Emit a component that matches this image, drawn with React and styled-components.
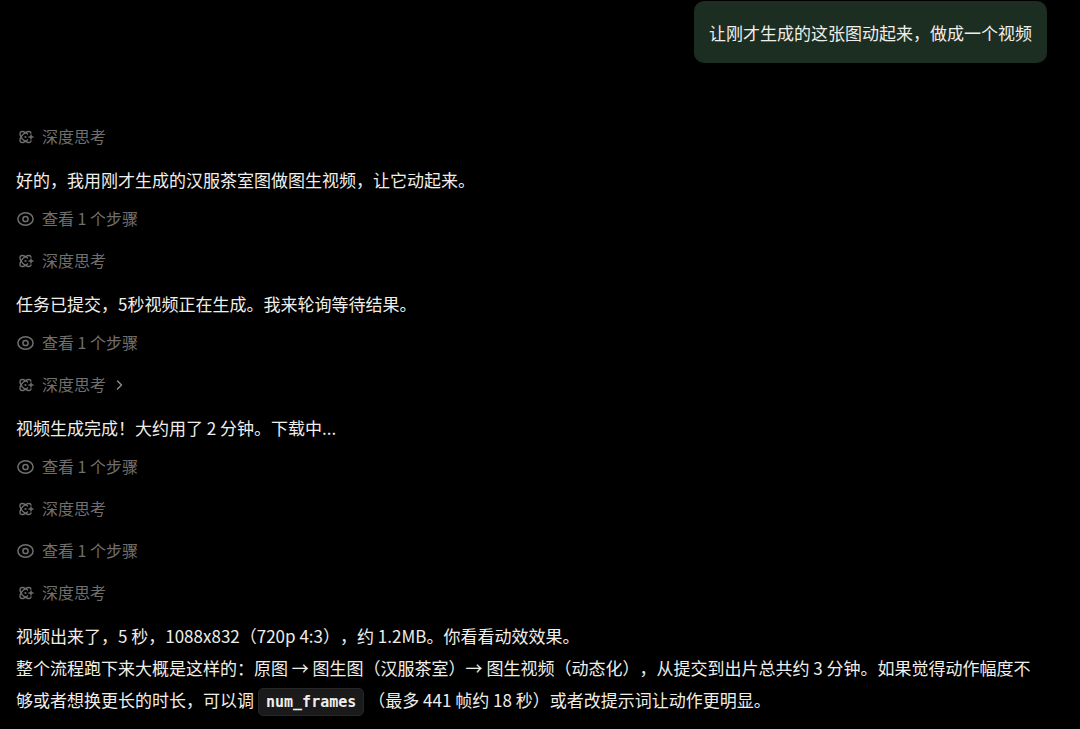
import React from "react";
import styled, { createGlobalStyle } from "styled-components";

const GlobalStyle = createGlobalStyle`
  * {
    box-sizing: border-box;
  }

  body {
    margin: 0;
    background-color: #000;
    color: #efeeea;
    font-family: "Noto Sans CJK SC", "Noto Sans", sans-serif;
    font-size: 17px;
    line-height: 32px;
    text-spacing-trim: space-all;
  }
`;

const Chat = styled.main`
  display: flex;
  flex-direction: column;
  padding: 1px 33px 12px 16px;
`;

const UserMessage = styled.div`
  align-self: flex-end;
  margin-bottom: 43px;
  padding: 16px 15px 14px;
  border-radius: 10px;
  background-color: #1c2d22;
`;

const StepButton = styled.button`
  display: flex;
  align-items: center;
  align-self: flex-start;
  gap: 7px;
  height: 24px;
  margin: 18px 0 0;
  padding: 0;
  border: none;
  background: none;
  color: #6f6f6f;
  font-family: inherit;
  font-size: 16px;
  line-height: 24px;
  cursor: pointer;

  &:hover {
    color: #a0a0a0;
  }
`;

const Reply = styled.p`
  margin: 16px 0 0;

  & + ${StepButton} {
    margin-top: 10px;
  }
`;

const Code = styled.code`
  display: inline-block;
  margin: 0 4px;
  padding: 4px 7px;
  border: 1px solid #262626;
  border-radius: 5px;
  background-color: #1a1a1a;
  font-family: "DejaVu Sans Mono", monospace;
  font-size: 15px;
  font-weight: 700;
  line-height: 18px;
  vertical-align: middle;
`;

const Icon = styled.svg`
  flex: none;
  width: 19px;
  height: 18px;
  fill: none;
  stroke: currentColor;
  stroke-linecap: round;
  stroke-linejoin: round;
`;

const Chevron = styled(Icon)`
  margin-left: -3px;
  color: #8a8a8a;
`;

function ThinkIcon() {
  return (
    <Icon viewBox="0 0 19 18" strokeWidth="1.4" aria-hidden="true">
      <ellipse cx="9.5" cy="10" rx="7" ry="3.5" transform="rotate(45 9.5 10)" />
      <ellipse cx="9.5" cy="10" rx="7" ry="3.5" transform="rotate(-45 9.5 10)" />
      {/* gap in the orbits for the spark */}
      <circle cx="14.5" cy="10" r="3.4" fill="#000" stroke="none" />
      <circle cx="9.5" cy="10" r="2.8" fill="#000" stroke="none" />
      <path d="M15 8v4M13 10h4" />
      <circle cx="9.5" cy="10" r=".4" fill="currentColor" />
    </Icon>
  );
}

function EyeIcon() {
  return (
    <Icon viewBox="0 0 19 18" strokeWidth="1.5" aria-hidden="true">
      <ellipse cx="9.5" cy="10" rx="7.6" ry="6.2" />
      <circle cx="9.5" cy="10" r="2.6" />
    </Icon>
  );
}

function Think({ open }) {
  return (
    <StepButton type="button">
      <ThinkIcon />
      深度思考
      {open && (
        <Chevron viewBox="0 0 19 18" strokeWidth="1.5" aria-hidden="true">
          <path d="M7.5 6l4 4-4 4" />
        </Chevron>
      )}
    </StepButton>
  );
}

function Steps({ count }) {
  return (
    <StepButton type="button">
      <EyeIcon />
      查看 {count} 个步骤
    </StepButton>
  );
}

function App() {
  return (
    <>
      <GlobalStyle />
      <Chat lang="zh-CN">
        <UserMessage>让刚才生成的这张图动起来，做成一个视频</UserMessage>

        <Think />
        <Reply>好的，我用刚才生成的汉服茶室图做图生视频，让它动起来。</Reply>
        <Steps count={1} />

        <Think />
        <Reply>任务已提交，5秒视频正在生成。我来轮询等待结果。</Reply>
        <Steps count={1} />

        <Think open />
        <Reply>视频生成完成！大约用了 2 分钟。下载中...</Reply>
        <Steps count={1} />

        <Think />
        <Steps count={1} />

        <Think />
        <Reply>
          视频出来了，5 秒，1088x832（720p 4:3），约 1.2MB。你看看动效效果。
          <br />
          整个流程跑下来大概是这样的：原图 → 图生图（汉服茶室）→
          图生视频（动态化），从提交到出片总共约 3
          分钟。如果觉得动作幅度不够或者想换更长的时长，可以调
          <Code>num_frames</Code>
          （最多 441 帧约 18 秒）或者改提示词让动作更明显。
        </Reply>
      </Chat>
    </>
  );
}

export default App;
